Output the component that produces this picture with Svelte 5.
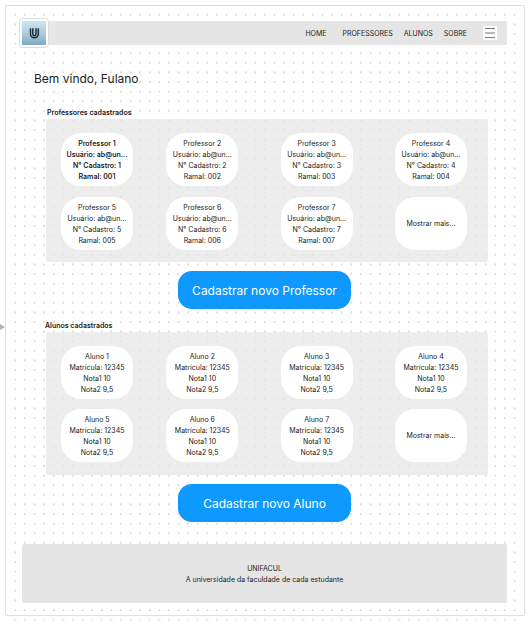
<script>
  const links = ['HOME', 'PROFESSORES', 'ALUNOS', 'SOBRE'];
  const professors = [1, 2, 3, 4, 5, 6, 7];
  const students = [1, 2, 3, 4, 5, 6, 7];
</script>

<div class="canvas">
  <svg class="dots" aria-hidden="true">
    <defs>
      <pattern id="grid" x="10.5" y="10" width="9.6" height="9.6" patternUnits="userSpaceOnUse">
        <circle cx="4.8" cy="4.8" r="0.65" fill="#a2a2a2" />
      </pattern>
    </defs>
    <rect x="10" y="10" width="509" height="100%" fill="url(#grid)" />
  </svg>
  <svg class="marker" viewBox="0 0 5 8" aria-hidden="true"><path d="M0 1 5 4 0 7Z" fill="#b3b3b3" /></svg>

  <div class="frame">
    <header>
      <a class="logo" href="#home" aria-label="UNIFACUL">
        <svg viewBox="0 0 24 24" aria-hidden="true">
          <defs>
            <linearGradient id="sky" x1="0" y1="0" x2="0" y2="1">
              <stop offset="0" stop-color="#cfe6f1" />
              <stop offset="0.5" stop-color="#aecddd" />
              <stop offset="1" stop-color="#7fa9c0" />
            </linearGradient>
          </defs>
          <rect width="24" height="24" fill="url(#sky)" />
          <path d="M8.500 7.300V13a3.900 3.700 0 0 0 7.800 0V7.300" fill="none" stroke="#1d2b38" stroke-width="1.500" />
          <path d="M10.800 7.300V13a1.600 1.700 0 0 0 3.200 0V7.300" fill="none" stroke="#1d2b38" stroke-width="1.500" />
        </svg>
      </a>
      <nav>
        {#each links as link}
          <a href="#{link.toLowerCase()}">{link}</a>
        {/each}
      </nav>
      <button class="menu" aria-label="Menu">
        <svg viewBox="0 0 14 14" aria-hidden="true"><path d="M2 2.500H12M2 7H12M2 11.500H12" stroke="#777" stroke-width="1" /></svg>
      </button>
    </header>

    <main>
      <h1>Bem vindo, Fulano</h1>

      <section>
        <h2>Professores cadastrados</h2>
        <div class="panel">
          {#each professors as n}
            <article class:selected={n === 1}>
              <p>Professor {n}</p>
              <p>Usuário: ab@un...</p>
              <p>N° Cadastro: {n}</p>
              <p>Ramal: 00{n}</p>
            </article>
          {/each}
          <button class="more">Mostrar mais...</button>
        </div>
        <button class="primary">Cadastrar novo Professor</button>
      </section>

      <section class="students">
        <h2>Alunos cadastrados</h2>
        <div class="panel">
          {#each students as n}
            <article>
              <p>Aluno {n}</p>
              <p>Matrícula: 12345</p>
              <p>Nota1 10</p>
              <p>Nota2 9,5</p>
            </article>
          {/each}
          <button class="more">Mostrar mais...</button>
        </div>
        <button class="primary">Cadastrar novo Aluno</button>
      </section>
    </main>

    <footer>
      <p>UNIFACUL</p>
      <p>A universidade da faculdade de cada estudante</p>
    </footer>
  </div>
</div>

<style>
  :global(body) {
    margin: 0;
    background: #fff;
  }
  .canvas {
    position: relative;
    box-sizing: border-box;
    padding: 5px 4px 5px 5px;
    font: 7px/11px Inter, "Liberation Sans", sans-serif;
    color: #222;
  }
  .dots {
    position: absolute;
    inset: 0;
    width: 100%;
    height: 100%;
  }
  .marker {
    position: absolute;
    left: 0;
    top: 323px;
    width: 5px;
    height: 8px;
  }
  .frame {
    position: relative;
    padding: 15px 17px 12px 16px;
    border: 1px solid #dedede;
    border-radius: 2px;
  }
  h1, h2, p {
    margin: 0;
  }
  button {
    padding: 0;
    border: 0;
    font: inherit;
    color: inherit;
    cursor: pointer;
  }
  a {
    color: inherit;
    text-decoration: none;
  }
  header {
    display: flex;
    align-items: center;
    height: 24px;
    padding-right: 10px;
    background: #e5e5e5;
    border-radius: 2px;
  }
  .logo {
    display: flex;
    margin-left: -3px;
    padding: 2px;
    border: 1px solid #dcdcdc;
    border-radius: 4px;
    background: #fff;
  }
  .logo svg {
    width: 24px;
    height: 24px;
  }
  nav {
    display: flex;
    gap: 11px;
    margin-left: auto;
  }
  nav a:first-child {
    margin-right: 5px;
  }
  .menu {
    width: 14px;
    height: 14px;
    margin-left: 16px;
    background: #fff;
  }
  .menu svg {
    display: block;
  }
  main {
    padding: 24px 12px 22px;
  }
  h1 {
    font-size: 12px;
    line-height: 20px;
    font-weight: 400;
  }
  section {
    display: flex;
    flex-direction: column;
    padding: 18px 12px 0;
  }
  h2 {
    font-size: 7px;
    line-height: 11px;
    font-weight: 600;
    margin-left: 1px;
  }
  .students {
    padding-top: 11px;
  }
  .students h2 {
    margin-left: -1px;
  }
  .panel {
    display: grid;
    grid-template-columns: 105fr 114fr 114fr 72px;
    row-gap: 11px;
    margin: 1px -5px 0 0;
    padding: 14px 21px 12px 15px;
    border-radius: 2px;
    background: rgb(229 229 229 / 70%);
  }
  .students .panel {
    row-gap: 10px;
    padding-bottom: 13px;
  }
  article, .more {
    box-sizing: border-box;
    width: 72px;
    height: 53px;
    border-radius: 20px;
    background: #fff;
    text-align: center;
    white-space: nowrap;
  }
  article {
    padding: 5px 0 4px;
  }
  .selected {
    font-weight: 600;
  }
  .primary {
    align-self: center;
    width: 173px;
    height: 38px;
    margin-top: 9px;
    border-radius: 14px;
    background: #0d99ff;
    color: #fff;
    font-size: 12px;
  }
  footer {
    display: flex;
    flex-direction: column;
    align-items: center;
    padding: 19px 0 18px;
    border-radius: 2px;
    background: #e5e5e5;
  }
</style>
